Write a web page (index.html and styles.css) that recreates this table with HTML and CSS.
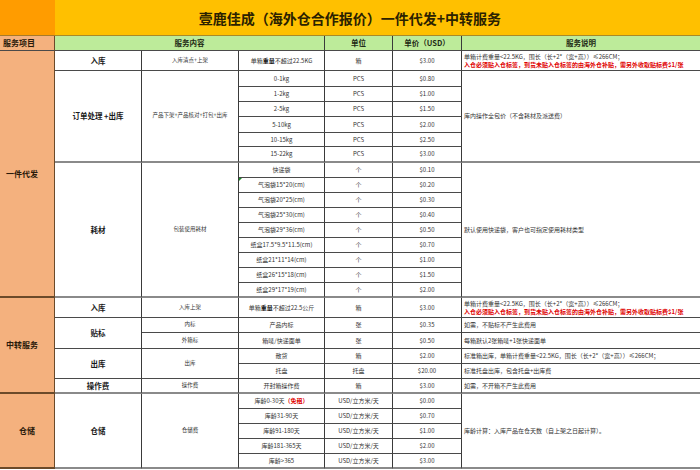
FILE: index.html
```html
<!DOCTYPE html>
<html lang="zh-CN">
<head>
<meta charset="utf-8">
<title>壹鹿佳成 报价</title>
<link rel="stylesheet" href="styles.css">
</head>
<body>
<div class="sheet">
  <!-- row 1 -->
  <div class="c corner"></div>
  <div class="c title s6">壹鹿佳成（海外仓合作报价）一件代发+中转服务</div>
  <!-- row 2 -->
  <div class="c hA">服务项目</div>
  <div class="c hd s3">服务内容</div>
  <div class="c hd">单位</div>
  <div class="c hd">单价（USD）</div>
  <div class="c hd last">服务说明</div>
  <!-- row 3 -->
  <div class="c colA left r16 tb">一件代发</div>
  <div class="c b">入库</div>
  <div class="c sm">入库清点+上架</div>
  <div class="c">单箱<b>重量</b>不超过22.5KG</div>
  <div class="c">箱</div>
  <div class="c">$3.00</div>
  <div class="c note last">
    <span>单箱计费重量&lt;22.5KG，围长（长+2*（宽+高））≤266CM；</span>
    <span class="red">入仓必须贴入仓标签，到货未贴入仓标签的由海外仓补贴，需另外收取贴标费$1/张</span>
  </div>
  <!-- rows 4-9 -->
  <div class="c b r6 tb">订单处理 +出库</div>
  <div class="c sm r6 tb">产品下架+产品核对+打包+出库</div>
  <div class="c">0-1kg</div>
  <div class="c">PCS</div>
  <div class="c">$0.80</div>
  <div class="c note last r6 tb"><span>库内操作全包价（不含耗材及派送费）</span></div>
  <div class="c">1-2kg</div><div class="c">PCS</div><div class="c">$1.00</div>
  <div class="c">2-5kg</div><div class="c">PCS</div><div class="c">$1.50</div>
  <div class="c">5-10kg</div><div class="c">PCS</div><div class="c">$2.00</div>
  <div class="c">10-15kg</div><div class="c">PCS</div><div class="c">$2.50</div>
  <div class="c tb">15-22kg</div><div class="c tb">PCS</div><div class="c tb">$3.00</div>
  <!-- rows 10-18 -->
  <div class="c b r9 tb">耗材</div>
  <div class="c sm r9 tb">包装使用耗材</div>
  <div class="c">快递袋</div>
  <div class="c">个</div>
  <div class="c">$0.10</div>
  <div class="c note last r9 tb"><span>默认使用快递袋，客户也可指定使用耗材类型</span></div>
  <div class="c mark">气泡袋15*20(cm)</div><div class="c">个</div><div class="c">$0.20</div>
  <div class="c">气泡袋20*25(cm)</div><div class="c">个</div><div class="c">$0.30</div>
  <div class="c">气泡袋25*30(cm)</div><div class="c">个</div><div class="c">$0.40</div>
  <div class="c">气泡袋29*36(cm)</div><div class="c">个</div><div class="c">$0.50</div>
  <div class="c">纸盒17.5*9.5*11.5(cm)</div><div class="c">个</div><div class="c">$0.70</div>
  <div class="c">纸盒21*11*14(cm)</div><div class="c">个</div><div class="c">$1.00</div>
  <div class="c">纸盒26*15*18(cm)</div><div class="c">个</div><div class="c">$1.50</div>
  <div class="c tb">纸盒29*17*19(cm)</div><div class="c tb">个</div><div class="c tb">$2.00</div>
  <!-- row 19 -->
  <div class="c colA left r6 tb">中转服务</div>
  <div class="c b">入库</div>
  <div class="c sm">入库上架</div>
  <div class="c">单箱<b>重量</b>不超过22.5公斤</div>
  <div class="c">箱</div>
  <div class="c">$3.00</div>
  <div class="c note last">
    <span>单箱计费重量&lt;22.5KG，围长（长+2*（宽+高））≤266CM；</span>
    <span class="red">入仓必须贴入仓标签，到货未贴入仓标签的由海外仓补贴，需另外收取贴标费$1/张</span>
  </div>
  <!-- row 20-21 -->
  <div class="c b r2">贴标</div>
  <div class="c sm">内标</div>
  <div class="c">产品内标</div>
  <div class="c">张</div>
  <div class="c">$0.35</div>
  <div class="c note last"><span>如需，不贴标不产生此费用</span></div>
  <div class="c sm">外箱标</div>
  <div class="c">箱唛/快递面单</div>
  <div class="c">张</div>
  <div class="c">$0.50</div>
  <div class="c note last"><span>每箱默认2张箱唛+1张快递面单</span></div>
  <!-- row 22-23 -->
  <div class="c b r2">出库</div>
  <div class="c sm r2">出库</div>
  <div class="c">散货</div>
  <div class="c">箱</div>
  <div class="c">$2.00</div>
  <div class="c note last"><span>标准箱出库，单箱计费重量&lt;22.5KG，围长（长+2*（宽+高））≤266CM；</span></div>
  <div class="c">托盘</div>
  <div class="c">托盘</div>
  <div class="c">$20.00</div>
  <div class="c note last"><span>标准托盘出库，包含托盘+出库费</span></div>
  <!-- row 24 -->
  <div class="c b tb">操作费</div>
  <div class="c sm tb">操作费</div>
  <div class="c tb">开封箱操作费</div>
  <div class="c tb">箱</div>
  <div class="c tb">$3.00</div>
  <div class="c note last tb"><span>如需，不开箱不产生此费用</span></div>
  <!-- rows 25-29 -->
  <div class="c colA r5 tb">仓储</div>
  <div class="c b r5 tb">仓储</div>
  <div class="c sm r5 tb">仓储费</div>
  <div class="c">库龄0-30天<span class="red">（免租）</span></div>
  <div class="c">USD/立方米/天</div>
  <div class="c">$0.00</div>
  <div class="c note last r5 tb"><span>库龄计算：入库产品在仓天数（自上架之日起计算）。</span></div>
  <div class="c">库龄31-90天</div><div class="c">USD/立方米/天</div><div class="c">$0.70</div>
  <div class="c">库龄91-180天</div><div class="c">USD/立方米/天</div><div class="c">$1.00</div>
  <div class="c">库龄181-365天</div><div class="c">USD/立方米/天</div><div class="c">$2.00</div>
  <div class="c tb">库龄&gt;365</div><div class="c tb">USD/立方米/天</div><div class="c tb">$3.00</div>
</div>
</body>
</html>
```
FILE: styles.css
```css
html, body {
  margin: 0;
  padding: 0;
  background: #ffffff;
}

.sheet {
  width: 700px;
  display: grid;
  grid-template-columns: 55px 87px 97px 86px 68px 69px 238px;
  grid-template-rows: 36px 15px 20px 16px 15px 15px 16px 14px 16px repeat(9, 15px) 20px 15px 16px 15px 15px 15px repeat(5, 15px);
  font-family: "Noto Sans CJK SC", "Liberation Sans", sans-serif;
  color: #333333;
}

.c {
  box-sizing: border-box;
  border-right: 1px solid #3a3a3a;
  border-bottom: 1px solid #4a4a4a;
  display: flex;
  align-items: center;
  justify-content: center;
  font-size: 6px;
  line-height: 1;
  white-space: nowrap;
  overflow: hidden;
  position: relative;
}

.c b {
  font-weight: 700;
  color: #111111;
}

.last {
  border-right: none;
}

.s3 { grid-column: span 3; }
.s6 { grid-column: span 6; }
.r2 { grid-row: span 2; }
.r5 { grid-row: span 5; }
.r6 { grid-row: span 6; }
.r9 { grid-row: span 9; }
.r16 { grid-row: span 16; }

.tb {
  border-bottom: 2px solid #8a8a8a;
}

.corner {
  background: #ff9c00;
  border-right: none;
  border-bottom: 1px solid #a87a2a;
}

.title {
  background: #ffc000;
  border-right: none;
  border-bottom: 1px solid #a88a2a;
  padding-right: 55px;
  font-size: 14px;
  font-weight: 700;
  color: #2b2200;
  letter-spacing: 0;
}

.hA {
  background: #f4b17e;
  justify-content: flex-start;
  padding-left: 3px;
  font-size: 8px;
  font-weight: 700;
  color: #2a1a0a;
  border-right: 1px solid #6b4a2a;
}

.hd {
  background: #bdeb9a;
  font-size: 7.5px;
  font-weight: 700;
  color: #1e2a14;
}

.colA {
  background: #f4b17e;
  font-size: 8px;
  font-weight: 700;
  color: #2a1a0a;
  border-right: 1px solid #6b4a2a;
  border-bottom: 2px solid #6b4a2a;
}

.colA.left {
  justify-content: flex-start;
  padding-left: 6px;
}

.b {
  font-size: 7.5px;
  font-weight: 700;
  color: #1a1a1a;
}

.sm {
  font-size: 5.5px;
}

.note {
  flex-direction: column;
  align-items: flex-start;
  justify-content: center;
  padding-left: 2px;
  gap: 2px;
}

.red {
  color: #e00000;
  font-weight: 700;
}

.mark::before {
  content: "";
  position: absolute;
  left: 0;
  top: 0;
  border-top: 3px solid #1d8a2a;
  border-right: 3px solid transparent;
}
```
